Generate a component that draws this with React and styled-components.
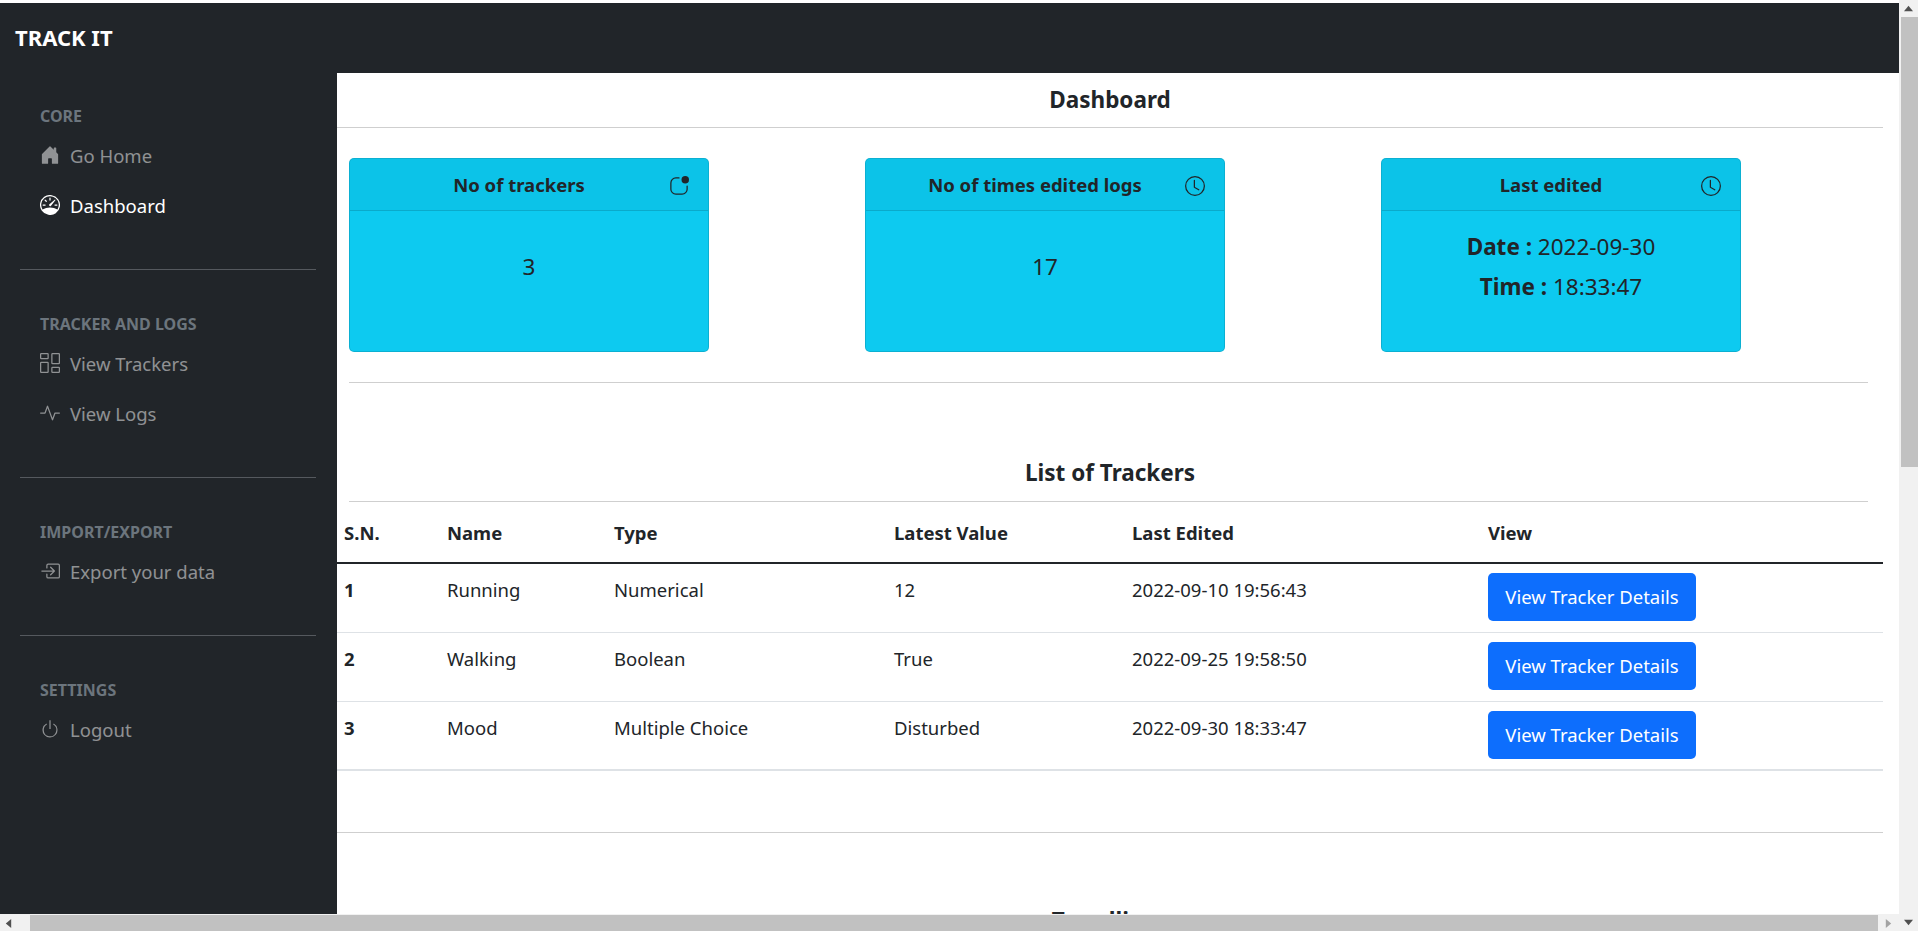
import React from 'react';
import styled, { createGlobalStyle } from 'styled-components';
import {
  BsHouseDoorFill,
  BsSpeedometer,
  BsColumnsGap,
  BsActivity,
  BsBoxArrowInRight,
  BsPower,
  BsAppIndicator,
  BsClock,
} from 'react-icons/bs';

const GlobalStyle = createGlobalStyle`
  html, body {
    margin: 0;
    height: 100%;
    overflow: hidden;
    background: #fff;
  }
  body {
    font-family: "Noto Sans", "Open Sans", sans-serif;
    color: #212529;
  }
  * { box-sizing: border-box; }
`;

const Shell = styled.div`
  height: 100vh;
  display: grid;
  grid-template-columns: 1fr 19px;
  grid-template-rows: 1fr 17px;
`;

const Page = styled.div`
  padding-top: 3px;
  min-height: 0;
  overflow: hidden;
  display: flex;
  flex-direction: column;
`;

const Navbar = styled.header`
  height: 70px;
  flex-shrink: 0;
  background: #212529;
  display: flex;
  align-items: center;
  padding-left: 15px;
`;

const Brand = styled.div`
  color: #fff;
  font-size: 22px;
  font-weight: 700;
  margin-top: -3px;
`;

const Body = styled.div`
  flex: 1;
  min-height: 0;
  display: flex;
`;

const Sidebar = styled.nav`
  width: 337px;
  flex-shrink: 0;
  background: #212529;
  padding: 28px 21px 0 20px;
`;

const MenuHeading = styled.div`
  padding-left: 20px;
  height: 29px;
  line-height: 30px;
  font-size: 16px;
  font-weight: 700;
  color: #6c757d;
`;

const MenuItem = styled.a`
  height: 50px;
  padding-left: 20px;
  display: flex;
  align-items: center;
  gap: 10px;
  font-size: 18.5px;
  color: ${(p) => (p.$active ? '#fff' : 'rgba(255, 255, 255, 0.5)')};
  svg {
    width: 20px;
    height: 20px;
    flex-shrink: 0;
  }
`;

const MenuDivider = styled.hr`
  margin: 39px 0 39px;
  border: 0;
  height: 1px;
  background: #55595e;
`;

const Main = styled.main`
  width: 1546px;
  flex-shrink: 0;
  overflow: hidden;
`;

const SectionTitle = styled.h2`
  margin: 0;
  height: ${(p) => p.$height || 54}px;
  line-height: 54px;
  text-align: center;
  font-size: 22.5px;
  font-weight: 700;
  color: #212529;
`;

const Rule = styled.hr`
  margin: 0 ${(p) => (p.$inset ? 15 : 0)}px 0 ${(p) => (p.$inset ? 12 : 0)}px;
  border: 0;
  height: 1px;
  background: #cfcfcf;
`;

const CardRow = styled.div`
  display: flex;
  gap: 156px;
  padding: 30px 0 30px 12px;
`;

const Card = styled.section`
  width: 360px;
  height: 194px;
  background: #0dcaf0;
  border: 1px solid rgba(0, 0, 0, 0.125);
  border-radius: 5px;
  overflow: hidden;
`;

const CardHeader = styled.div`
  height: 52px;
  padding: 0 19px;
  display: flex;
  align-items: center;
  background: rgba(0, 0, 0, 0.03);
  border-bottom: 1px solid rgba(0, 0, 0, 0.125);
  svg {
    width: 20px;
    height: 20px;
    flex-shrink: 0;
    margin-top: 2px;
  }
`;

const CardTitle = styled.div`
  flex: 1;
  text-align: center;
  font-size: 18.5px;
  font-weight: 700;
`;

const CardBody = styled.div`
  padding-top: ${(p) => p.$top}px;
  text-align: center;
  font-size: 22.5px;
  line-height: 40px;
  strong { font-weight: 700; }
`;

const TrackersBlock = styled.div`
  padding-top: 63px;
`;

const Table = styled.table`
  width: 100%;
  table-layout: fixed;
  border-collapse: collapse;
  font-size: 18.5px;
  border-bottom: 2px solid #dee2e6;
`;

const HeadCell = styled.th`
  height: 61px;
  padding: 0 7px;
  text-align: left;
  font-weight: 700;
  border-bottom: 2px solid #212529;
`;

const Cell = styled.td`
  height: 69px;
  padding: 11px 7px 0;
  vertical-align: top;
  line-height: 30px;
  font-weight: ${(p) => (p.$bold ? 700 : 400)};
  border-bottom: 1px solid #dee2e6;
  tr:last-child & { border-bottom: 0; }
`;

const ButtonCell = styled(Cell)`
  padding-top: 9px;
`;

const Button = styled.button`
  width: 208px;
  height: 48px;
  padding: 0;
  border: 0;
  border-radius: 5px;
  background: #0d6efd;
  color: #fff;
  font: inherit;
`;

const TrendBlock = styled.div`
  padding-top: 61px;
`;

const VerticalBar = styled.div`
  grid-column: 2;
  grid-row: 1 / 3;
  background: #f1f1f1;
  display: flex;
  flex-direction: column;
  align-items: center;
`;

const ArrowBox = styled.div`
  height: 17px;
  flex-shrink: 0;
  display: flex;
  align-items: center;
  justify-content: center;
  color: ${(p) => p.$color || '#505050'};
  svg { width: 9px; height: 9px; fill: currentColor; }
`;

const VerticalThumb = styled.div`
  width: 17px;
  height: 450px;
  margin-left: 2px;
  background: #c1c1c1;
`;

const VerticalSpace = styled.div`
  flex: 1;
`;

const HorizontalBar = styled.div`
  grid-column: 1;
  grid-row: 2;
  background: #f1f1f1;
  display: flex;
  align-items: center;
  padding-top: 1px;
`;

const HorizontalThumb = styled.div`
  width: 1848px;
  height: 16px;
  margin-left: 13px;
  background: #c1c1c1;
`;

const HorizontalArrow = styled(ArrowBox)`
  width: ${(p) => p.$width}px;
  height: 16px;
`;

const trackers = [
  { name: 'Running', type: 'Numerical', value: '12', edited: '2022-09-10 19:56:43' },
  { name: 'Walking', type: 'Boolean', value: 'True', edited: '2022-09-25 19:58:50' },
  { name: 'Mood', type: 'Multiple Choice', value: 'Disturbed', edited: '2022-09-30 18:33:47' },
];

const columns = [103, 167, 280, 238, 356, 402];

const Triangle = ({ points }) => (
  <svg viewBox="0 0 10 10">
    <polygon points={points} />
  </svg>
);

export default function App() {
  return (
    <Shell>
      <GlobalStyle />
      <Page>
        <Navbar>
          <Brand>TRACK IT</Brand>
        </Navbar>
        <Body>
          <Sidebar>
            <MenuHeading>CORE</MenuHeading>
            <MenuItem><BsHouseDoorFill />Go Home</MenuItem>
            <MenuItem $active><BsSpeedometer />Dashboard</MenuItem>
            <MenuDivider />
            <MenuHeading>TRACKER AND LOGS</MenuHeading>
            <MenuItem><BsColumnsGap />View Trackers</MenuItem>
            <MenuItem><BsActivity />View Logs</MenuItem>
            <MenuDivider />
            <MenuHeading>IMPORT/EXPORT</MenuHeading>
            <MenuItem><BsBoxArrowInRight />Export your data</MenuItem>
            <MenuDivider />
            <MenuHeading>SETTINGS</MenuHeading>
            <MenuItem><BsPower />Logout</MenuItem>
          </Sidebar>
          <Main>
            <SectionTitle>Dashboard</SectionTitle>
            <Rule />
            <CardRow>
              <Card>
                <CardHeader>
                  <CardTitle>No of trackers</CardTitle>
                  <BsAppIndicator />
                </CardHeader>
                <CardBody $top={36}>3</CardBody>
              </Card>
              <Card>
                <CardHeader>
                  <CardTitle>No of times edited logs</CardTitle>
                  <BsClock />
                </CardHeader>
                <CardBody $top={36}>17</CardBody>
              </Card>
              <Card>
                <CardHeader>
                  <CardTitle>Last edited</CardTitle>
                  <BsClock />
                </CardHeader>
                <CardBody $top={16}>
                  <div><strong>Date :</strong> 2022-09-30</div>
                  <div><strong>Time :</strong> 18:33:47</div>
                </CardBody>
              </Card>
            </CardRow>
            <Rule $inset />
            <TrackersBlock>
              <SectionTitle $height={55}>List of Trackers</SectionTitle>
              <Rule $inset />
            </TrackersBlock>
            <Table>
              <colgroup>
                {columns.map((w) => (
                  <col key={w} width={w} />
                ))}
              </colgroup>
              <thead>
                <tr>
                  <HeadCell>S.N.</HeadCell>
                  <HeadCell>Name</HeadCell>
                  <HeadCell>Type</HeadCell>
                  <HeadCell>Latest Value</HeadCell>
                  <HeadCell>Last Edited</HeadCell>
                  <HeadCell>View</HeadCell>
                </tr>
              </thead>
              <tbody>
                {trackers.map((t, i) => (
                  <tr key={t.name}>
                    <Cell $bold>{i + 1}</Cell>
                    <Cell>{t.name}</Cell>
                    <Cell>{t.type}</Cell>
                    <Cell>{t.value}</Cell>
                    <Cell>{t.edited}</Cell>
                    <ButtonCell>
                      <Button>View Tracker Details</Button>
                    </ButtonCell>
                  </tr>
                ))}
              </tbody>
            </Table>
            <TrendBlock>
              <Rule />
            </TrendBlock>
            <TrendBlock>
              <SectionTitle>Trendlines</SectionTitle>
            </TrendBlock>
          </Main>
        </Body>
      </Page>
      <VerticalBar>
        <ArrowBox><Triangle points="5,2 10,8 0,8" /></ArrowBox>
        <VerticalThumb />
        <VerticalSpace />
        <ArrowBox><Triangle points="0,2 10,2 5,8" /></ArrowBox>
      </VerticalBar>
      <HorizontalBar>
        <HorizontalArrow $width={17}><Triangle points="8,0 8,10 2,5" /></HorizontalArrow>
        <HorizontalThumb />
        <HorizontalArrow $width={21} $color="#a3a3a3"><Triangle points="2,0 2,10 8,5" /></HorizontalArrow>
      </HorizontalBar>
    </Shell>
  );
}
